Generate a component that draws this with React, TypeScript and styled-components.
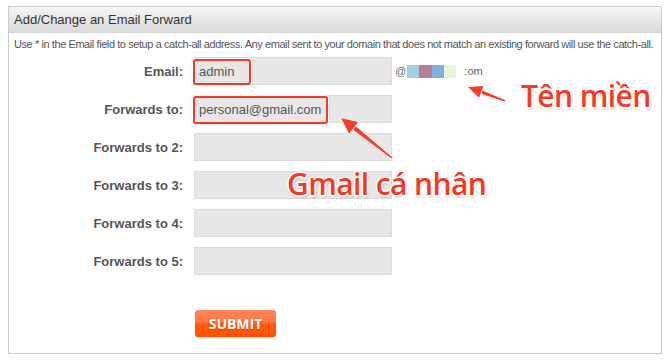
import React from "react";
import styled, { createGlobalStyle } from "styled-components";

const GlobalStyle = createGlobalStyle`
  html, body {
    margin: 0;
    background: #ffffff;
    font-family: "Liberation Sans", Arial, sans-serif;
  }
`;

const forwards = ["Forwards to 2:", "Forwards to 3:", "Forwards to 4:", "Forwards to 5:"];
const swatches = ["#9fd0e4", "#b47f93", "#7fb2e0", "#e2f9d9"];

export default function App() {
  return (
    <>
      <GlobalStyle />
      <Page>
        <Panel>
          <PanelHeader>Add/Change an Email Forward</PanelHeader>
          <Hint>
            Use * in the Email field to setup a catch-all address. Any email sent to your domain that
            does not match an existing forward will use the catch-all.
          </Hint>
          <Form>
            <Row>
              <Label>Email:</Label>
              <Field value="admin" readOnly />
              <Domain>
                @
                <Swatches>
                  {swatches.map((c) => (
                    <Swatch key={c} $color={c} />
                  ))}
                </Swatches>
                <DomainTail>:om</DomainTail>
              </Domain>
            </Row>
            <Row>
              <Label>Forwards to:</Label>
              <Field value="personal@gmail.com" readOnly />
            </Row>
            {forwards.map((label) => (
              <Row key={label}>
                <Label>{label}</Label>
                <Field value="" readOnly />
              </Row>
            ))}
          </Form>
          <SubmitButton type="button">SUBMIT</SubmitButton>
        </Panel>

        {/* annotations drawn on top of the screenshot */}
        <Highlight $left={193} $top={59} $width={58} $height={26} />
        <Highlight $left={193} $top={96} $width={135} $height={28} />
        <Arrows width="670" height="364" viewBox="0 0 670 364">
          <g fill="#f2402c" stroke="#ffffff" strokeWidth="1.5" paintOrder="stroke" strokeLinejoin="round">
            <polygon points="505.3,100.3 504.7,101.7 480.4,93.6 481.8,90.3" />
            <polygon points="468,87 483.4,86.1 479,97.8" />
            <polygon points="392.6,157.4 391.4,158.6 352.4,129.3 355.1,125.8" />
            <polygon points="341,118 358.2,122 349.1,133.7" />
          </g>
        </Arrows>
        <Callout $left={521} $top={78}>Tên miền</Callout>
        <Callout $left={287} $top={166}>Gmail cá nhân</Callout>
      </Page>
    </>
  );
}

const Page = styled.div`
  position: relative;
  width: 670px;
  height: 364px;
  padding: 6px 8px 0;
  box-sizing: border-box;
`;

const Panel = styled.div`
  width: 654px;
  height: 348px;
  box-sizing: border-box;
  border: 1px solid #cccccc;
  display: flex;
  flex-direction: column;
`;

const PanelHeader = styled.div`
  height: 25px;
  display: flex;
  align-items: center;
  padding-left: 5px;
  background: linear-gradient(#f5f5f5, #dadada);
  border-bottom: 1px solid #d2d2d2;
  font-size: 13px;
  color: #333333;
`;

const Hint = styled.div`
  padding: 5px 0 0 5px;
  font-size: 11px;
  line-height: 13px;
  letter-spacing: -0.42px;
  color: #555555;
  white-space: nowrap;
`;

const Form = styled.div`
  display: flex;
  flex-direction: column;
  gap: 10px;
  margin-top: 6px;
`;

const Row = styled.div`
  display: grid;
  grid-template-columns: 174px 198px auto;
  column-gap: 11px;
  align-items: center;
  height: 28px;
`;

const Label = styled.label`
  text-align: right;
  font-size: 13px;
  font-weight: bold;
  color: #555555;
`;

const Field = styled.input`
  width: 198px;
  height: 28px;
  box-sizing: border-box;
  margin: 0;
  padding: 0 4px;
  background: #e8e7e5;
  border: 1px solid #dcdbd9;
  font-family: "Liberation Sans", Arial, sans-serif;
  font-size: 13px;
  color: #555555;
  outline: none;
`;

const Domain = styled.div`
  display: flex;
  align-items: center;
  margin-left: -8px;
  font-size: 11px;
  color: #666666;
`;

const Swatches = styled.span`
  display: flex;
  margin-left: 1px;
`;

const Swatch = styled.span<{ $color: string }>`
  width: 12.3px;
  height: 13px;
  background: ${({ $color }) => $color};
`;

const DomainTail = styled.span`
  margin-left: 8px;
`;

const SubmitButton = styled.button`
  width: 81px;
  height: 27px;
  margin: 35px 0 0 186px;
  padding: 0;
  border: none;
  border-radius: 3px;
  background: linear-gradient(#ff8a5a 0%, #ff7442 45%, #ff5a12 52%, #ff5200 100%);
  box-shadow: 0 1px 1px rgba(0, 0, 0, 0.15);
  color: #ffffff;
  font-family: "Open Sans", sans-serif;
  font-weight: 700;
  font-size: 14px;
  text-shadow: 0 1px 1px rgba(120, 30, 0, 0.35);
`;

const Highlight = styled.div<{ $left: number; $top: number; $width: number; $height: number }>`
  position: absolute;
  left: ${({ $left }) => $left}px;
  top: ${({ $top }) => $top}px;
  width: ${({ $width }) => $width}px;
  height: ${({ $height }) => $height}px;
  box-sizing: border-box;
  border: 2.5px solid #f2382a;
  border-radius: 3px;
  box-shadow: 0 0 0 1px rgba(255, 255, 255, 0.9), 0 0 2px 1px rgba(0, 0, 0, 0.12);
`;

const Arrows = styled.svg`
  position: absolute;
  left: 0;
  top: 0;
  pointer-events: none;
`;

const Callout = styled.span<{ $left: number; $top: number }>`
  position: absolute;
  left: ${({ $left }) => $left}px;
  top: ${({ $top }) => $top}px;
  font-family: "Open Sans", sans-serif;
  font-weight: 600;
  font-size: 30px;
  line-height: 1.2;
  letter-spacing: -0.6px;
  color: #f23a26;
  white-space: nowrap;
  text-shadow: 1.5px 0 0 #fff, -1.5px 0 0 #fff, 0 1.5px 0 #fff, 0 -1.5px 0 #fff,
    1px 1px 0 #fff, -1px -1px 0 #fff, 1px -1px 0 #fff, -1px 1px 0 #fff,
    1px 2px 3px rgba(0, 0, 0, 0.25);
`;
